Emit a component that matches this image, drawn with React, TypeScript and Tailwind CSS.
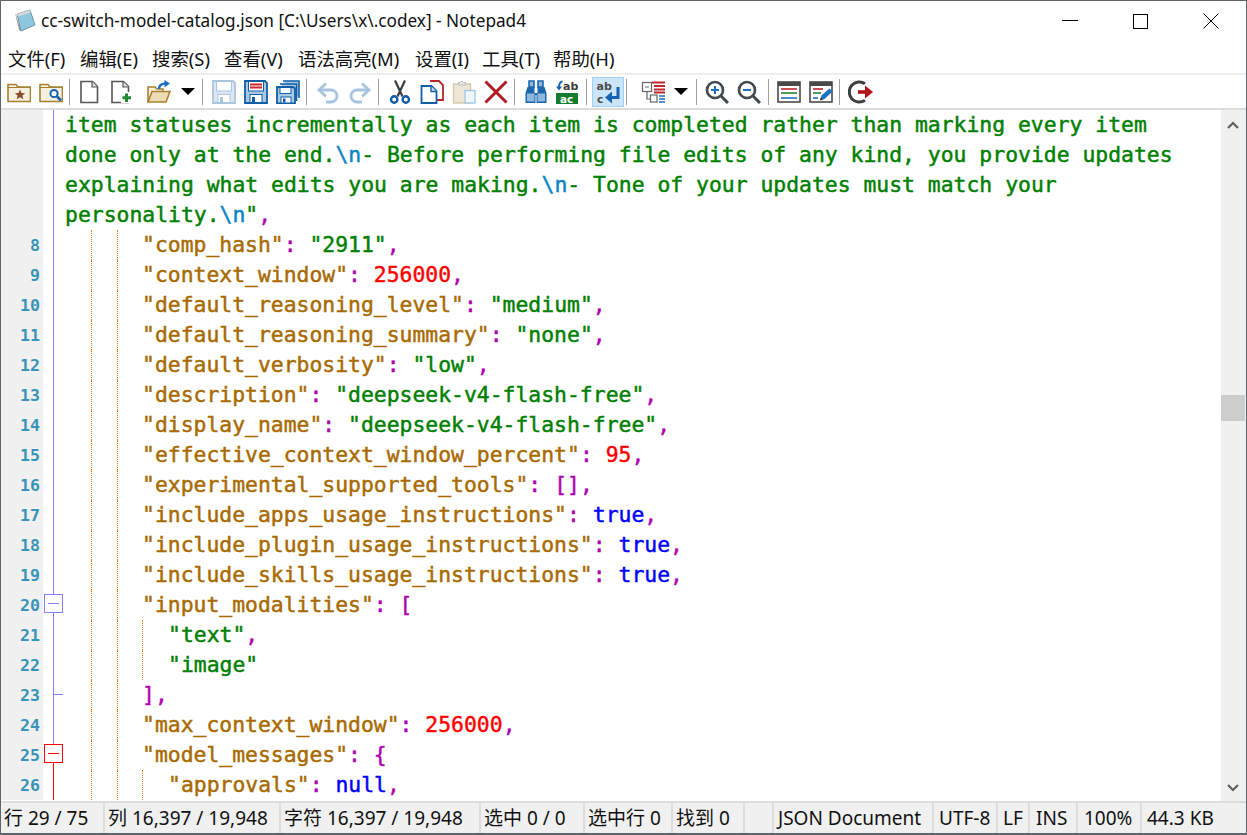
import React from "react";

const UI = "font-['Noto_Sans','Noto_Sans_CJK_SC',sans-serif]";

type Tok = [string, string];
const K = "text-[#a86a00]";
const S = "text-[#008000]";
const N = "text-[#ff0000]";
const B = "text-[#0000ff]";
const P = "text-[#b000b0]";
const E = "text-[#0a84c6]";

function kv(key: string, rest: Tok[]): Tok[] {
  return [[K, `"${key}"`], [P, ": "], ...rest];
}
const c: Tok = [P, ","];

type Row = { n?: number; g: number; t: Tok[]; fold?: string };
const rows: Row[] = [
  { g: 0, fold: "b", t: [[S, "item statuses incrementally as each item is completed rather than marking every item"]] },
  { g: 0, fold: "b", t: [[S, "done only at the end."], [E, "\\n"], [S, "- Before performing file edits of any kind, you provide updates"]] },
  { g: 0, fold: "b", t: [[S, "explaining what edits you are making."], [E, "\\n"], [S, "- Tone of your updates must match your"]] },
  { g: 0, fold: "b", t: [[S, "personality."], [E, "\\n"], [S, '"'], c] },
  { n: 8, g: 3, fold: "b", t: [...kv("comp_hash", [[S, '"2911"'], c])] },
  { n: 9, g: 3, fold: "b", t: [...kv("context_window", [[N, "256000"], c])] },
  { n: 10, g: 3, fold: "b", t: [...kv("default_reasoning_level", [[S, '"medium"'], c])] },
  { n: 11, g: 3, fold: "b", t: [...kv("default_reasoning_summary", [[S, '"none"'], c])] },
  { n: 12, g: 3, fold: "b", t: [...kv("default_verbosity", [[S, '"low"'], c])] },
  { n: 13, g: 3, fold: "b", t: [...kv("description", [[S, '"deepseek-v4-flash-free"'], c])] },
  { n: 14, g: 3, fold: "b", t: [...kv("display_name", [[S, '"deepseek-v4-flash-free"'], c])] },
  { n: 15, g: 3, fold: "b", t: [...kv("effective_context_window_percent", [[N, "95"], c])] },
  { n: 16, g: 3, fold: "b", t: [...kv("experimental_supported_tools", [[P, "[]"], c])] },
  { n: 17, g: 3, fold: "b", t: [...kv("include_apps_usage_instructions", [[B, "true"], c])] },
  { n: 18, g: 3, fold: "b", t: [...kv("include_plugin_usage_instructions", [[B, "true"], c])] },
  { n: 19, g: 3, fold: "b", t: [...kv("include_skills_usage_instructions", [[B, "true"], c])] },
  { n: 20, g: 3, fold: "openb", t: [...kv("input_modalities", [[P, "["]])] },
  { n: 21, g: 4, fold: "b", t: [[S, '"text"'], c] },
  { n: 22, g: 4, fold: "b", t: [[S, '"image"']] },
  { n: 23, g: 3, fold: "tick", t: [[P, "]"], c] },
  { n: 24, g: 3, fold: "b", t: [...kv("max_context_window", [[N, "256000"], c])] },
  { n: 25, g: 3, fold: "openr", t: [...kv("model_messages", [[P, "{"]])] },
  { n: 26, g: 4, fold: "r", t: [...kv("approvals", [[B, "null"], c])] },
];

function Fold({ kind }: { kind?: string }) {
  const blue = "#8080ff";
  const red = "#ff0000";
  return (
    <svg width="22" height="30" className="shrink-0 block" shapeRendering="crispEdges">
      {kind === "b" && <line x1="10.5" y1="0" x2="10.5" y2="30" stroke={blue} />}
      {kind === "r" && <line x1="10.5" y1="0" x2="10.5" y2="30" stroke={red} />}
      {kind === "tick" && (
        <>
          <line x1="10.5" y1="0" x2="10.5" y2="30" stroke={blue} />
          <line x1="10" y1="14.5" x2="20" y2="14.5" stroke={blue} />
        </>
      )}
      {kind === "openb" && (
        <>
          <line x1="10.5" y1="0" x2="10.5" y2="30" stroke={blue} />
          <rect x="1.5" y="4.5" width="18" height="18" fill="#fff" stroke={blue} />
          <line x1="5" y1="13.5" x2="16" y2="13.5" stroke={blue} />
        </>
      )}
      {kind === "openr" && (
        <>
          <line x1="10.5" y1="0" x2="10.5" y2="4" stroke={blue} />
          <line x1="10.5" y1="23" x2="10.5" y2="30" stroke={red} />
          <rect x="1.5" y="4.5" width="18" height="18" fill="#fff" stroke={red} />
          <line x1="5" y1="13.5" x2="16" y2="13.5" stroke={red} />
        </>
      )}
    </svg>
  );
}

function EditorRow({ r }: { r: Row }) {
  return (
    <div className="flex h-[30px] shrink-0">
      <div className="w-[42px] shrink-0 bg-[#f0f0f0] pr-[3px] text-right text-[#3a94b8] font-['DejaVu_Sans_Mono',monospace] text-[16.6px] font-bold leading-[32px]">
        {r.n ?? ""}
      </div>
      <Fold kind={r.fold} />
      <div className="flex-1 min-w-0 flex whitespace-pre font-['DejaVu_Sans_Mono',monospace] text-[21.4px] leading-[30px] [-webkit-text-stroke:0.45px]">
        {r.g > 0 && <span className="w-[26px] shrink-0" />}
        {r.g > 1 && <span className="w-[26px] shrink-0 border-l border-dotted border-[#e8801a]" />}
        {r.g > 2 && <span className="w-[25px] shrink-0 border-l border-dotted border-[#e8801a]" />}
        {r.g > 3 && <span className="w-[26px] shrink-0 border-l border-dotted border-[#e8801a]" />}
        <span>
          {r.t.map((t, i) => (
            <span key={i} className={t[0]}>
              {t[1]}
            </span>
          ))}
        </span>
      </div>
    </div>
  );
}

/* ---------- toolbar icons ---------- */
const Svg = ({ children, w = 24 }: { children: React.ReactNode; w?: number }) => (
  <svg width={w} height="24" viewBox={`0 0 ${w} 24`} fill="none" className="block">
    {children}
  </svg>
);

const FolderBase = () => (
  <path d="M1 21.5V4.5h8l2 2.5h12.5v14.5z" fill="#f6f0df" stroke="#a8812e" strokeWidth="1.6" />
);
const IconFolderStar = () => (
  <Svg>
    <FolderBase />
    <path d="M1 7.5h22.5" stroke="#a8812e" />
    <path d="M13 9.5l1.5 3.4 3.7.3-2.8 2.4.9 3.6-3.3-2-3.3 2 .9-3.6-2.8-2.4 3.7-.3z" fill="#8a4b28" />
  </Svg>
);
const IconFolderFind = () => (
  <Svg>
    <FolderBase />
    <path d="M1 7.5h22.5" stroke="#a8812e" />
    <circle cx="15" cy="13.5" r="3.6" fill="#fff" stroke="#1462b4" strokeWidth="2" />
    <path d="M18 16.5l4 4" stroke="#1462b4" strokeWidth="2.6" />
  </Svg>
);
const IconNew = () => (
  <Svg>
    <path d="M3 1.5h11.5l5 5v16h-16.5z" fill="#fff" stroke="#565656" strokeWidth="1.6" />
    <path d="M14 1.5v5.5h5.5" fill="#ddd" stroke="#565656" strokeWidth="1.2" />
  </Svg>
);
const IconNewAdd = () => (
  <Svg>
    <path d="M2 1.5h11.5l5 5v16h-16.5z" fill="#fff" stroke="#565656" strokeWidth="1.6" />
    <path d="M13 1.5v5.5h5.5" fill="#ddd" stroke="#565656" strokeWidth="1.2" />
    <rect x="11" y="12" width="11" height="11" fill="#fff" />
    <path d="M16.5 13.5v8.5M12.5 17.7h8.5" stroke="#1e8a32" strokeWidth="3" />
  </Svg>
);
const IconOpen = () => (
  <Svg w={26}>
    <path d="M2 22V7h7l2 2h6v3" fill="#f6f0df" stroke="#a8812e" strokeWidth="1.6" />
    <path d="M2 22l4-10.5h18L20 22z" fill="#ecdcb6" stroke="#a8812e" strokeWidth="1.6" />
    <path d="M13 9c0-4 3-5.5 7-5.5" stroke="#1b6fc4" strokeWidth="2.4" />
    <path d="M18.5 0l5.5 3.5L18.5 7.5z" fill="#1b6fc4" />
  </Svg>
);
const Caret = () => (
  <svg width="14" height="7" viewBox="0 0 14 7" className="block">
    <path d="M0 0h14L7 7z" fill="#000" />
  </svg>
);
const Floppy = ({ main, paper, stripe }: { main: string; paper: string; stripe?: boolean }) => (
  <>
    <path d="M1 1h20l2 2v20H1z" fill={paper} stroke={main} strokeWidth="1.8" />
    <rect x="4.5" y="1.5" width="15" height="9.5" fill="#fff" stroke={main} />
    {stripe && <path d="M6 4.5h12M6 7.5h12" stroke="#c8252b" strokeWidth="1.8" />}
    <rect x="6" y="14.5" width="12" height="8" fill="#fff" stroke={main} />
    <rect x="8" y="17" width="3" height="5" fill={main} />
  </>
);
const IconSaveOff = () => (
  <Svg>
    <Floppy main="#a9c5dd" paper="#dbe6ef" />
  </Svg>
);
const IconSaveAs = () => (
  <Svg>
    <Floppy main="#0f5ea6" paper="#a9c9e4" stripe />
  </Svg>
);
const IconSaveAll = () => (
  <Svg>
    <path d="M7 1h16v17" fill="#a9c9e4" stroke="#0f5ea6" strokeWidth="1.6" />
    <path d="M4 4h16.5v17" fill="#a9c9e4" stroke="#0f5ea6" strokeWidth="1.6" />
    <path d="M1 7h16l2 1.5v15H1z" fill="#a9c9e4" stroke="#0f5ea6" strokeWidth="1.8" />
    <rect x="4" y="7.5" width="11" height="6" fill="#fff" stroke="#0f5ea6" />
    <rect x="5" y="17" width="10" height="6" fill="#fff" stroke="#0f5ea6" />
    <rect x="7" y="18.5" width="2.5" height="4" fill="#0f5ea6" />
  </Svg>
);
const IconUndo = () => (
  <Svg>
    <path d="M4 10h11a6 6 0 0 1 0 12h-5" stroke="#a6c4dd" strokeWidth="2.8" />
    <path d="M10 3.5L3 10l7 6.5" stroke="#a6c4dd" strokeWidth="2.8" />
  </Svg>
);
const IconRedo = () => (
  <Svg>
    <path d="M20 10H9a6 6 0 0 0 0 12h5" stroke="#a6c4dd" strokeWidth="2.8" />
    <path d="M14 3.5L21 10l-7 6.5" stroke="#a6c4dd" strokeWidth="2.8" />
  </Svg>
);
const IconCut = () => (
  <Svg>
    <path d="M7 0.5l7.5 16M17 0.5L9.5 16.5" stroke="#3d3d3d" strokeWidth="2.2" />
    <circle cx="6.2" cy="19.5" r="3.2" fill="#fff" stroke="#0f5ea6" strokeWidth="2.4" />
    <circle cx="17.8" cy="19.5" r="3.2" fill="#fff" stroke="#0f5ea6" strokeWidth="2.4" />
  </Svg>
);
const IconCopy = () => (
  <Svg>
    <path d="M10 1h9l4 4v15h-7" fill="#fff" stroke="#b3262a" strokeWidth="1.8" />
    <path d="M1.5 6h10l5 5v12h-15z" fill="#fff" stroke="#0f5ea6" strokeWidth="1.8" />
    <path d="M11 6v5.5h5.5" fill="#cfe0ef" stroke="#0f5ea6" strokeWidth="1.4" />
  </Svg>
);
const IconPaste = () => (
  <Svg>
    <rect x="1.5" y="4" width="17" height="19" fill="#ede6d6" stroke="#d3c7a8" strokeWidth="1.4" />
    <path d="M6.5 5V2.5h2L10 1l1.5 1.5h2V5z" fill="#e9e9e9" stroke="#b9b9b9" />
    <rect x="13" y="10.5" width="10" height="12.5" fill="#eef5fb" stroke="#a6c8e4" strokeWidth="1.4" />
  </Svg>
);
const IconDelete = () => (
  <Svg>
    <path d="M1.5 1.5l21 21M22.5 1.5l-21 21" stroke="#b21a1f" strokeWidth="3" />
  </Svg>
);
const IconFind = () => (
  <Svg>
    <path d="M5 1h5v6H5zM14 1h5v6h-5z" fill="#8fb8dc" stroke="#1a66ae" strokeWidth="1.6" />
    <path d="M3.5 7h7v6h3V7h7l2 6v10h-10V15h-1v8H1.5V13z" fill="#1a66ae" />
    <rect x="3" y="13.5" width="7.5" height="8" fill="#8fb8dc" />
    <rect x="13.5" y="13.5" width="7.5" height="8" fill="#8fb8dc" />
  </Svg>
);
const IconReplace = () => (
  <Svg>
    <path d="M6.5 1.5C3.5 1.5 3 4 3 8" stroke="#1762b4" strokeWidth="2" />
    <path d="M0 6.5h6L3 10.5z" fill="#1762b4" />
    <text x="7" y="9.5" fontFamily="DejaVu Sans" fontWeight="700" fontSize="11" fill="#3c3c3c">ab</text>
    <rect x="0" y="13" width="22" height="11" fill="#147c2c" />
    <text x="4" y="22.5" fontFamily="DejaVu Sans" fontWeight="700" fontSize="10.5" fill="#fff">ac</text>
  </Svg>
);
const IconWrap = () => (
  <Svg>
    <text x="0.5" y="9.5" fontFamily="DejaVu Sans" fontWeight="700" fontSize="11" fill="#4a4a4a">ab</text>
    <text x="1" y="22.5" fontFamily="DejaVu Sans" fontWeight="700" fontSize="10.5" fill="#4a4a4a">c</text>
    <path d="M22 7v10.5H14" stroke="#1462b4" strokeWidth="3" />
    <path d="M16 11.5l-7 6 7 6z" fill="#1462b4" />
  </Svg>
);
const IconScheme = () => (
  <Svg>
    <rect x="1.5" y="2.5" width="9" height="9" fill="#fff" stroke="#666" strokeWidth="1.2" />
    <path d="M4 7h4M6 12v7h4" stroke="#666" strokeWidth="1.2" />
    <rect x="9.5" y="15" width="6.5" height="7" fill="#fff" stroke="#666" strokeWidth="1.2" />
    <path d="M11 2.5h13M13 6h11M13 9.5h11M13 12.5h11" stroke="#c0262b" strokeWidth="1.8" />
    <path d="M18 16h6M18 19h6M18 22h6" stroke="#1b6fc4" strokeWidth="1.6" />
  </Svg>
);
const IconZoomIn = ({ minus }: { minus?: boolean }) => (
  <Svg>
    <circle cx="10" cy="10" r="8" fill="#fff" stroke="#3f4a50" strokeWidth="2.6" />
    <path d="M16 16l7 7" stroke="#3f4a50" strokeWidth="3" />
    <path d="M6 10h8" stroke="#1b6fc4" strokeWidth="2" />
    {!minus && <path d="M10 6v8" stroke="#1b6fc4" strokeWidth="2" />}
  </Svg>
);
const IconView = ({ edit }: { edit?: boolean }) => (
  <Svg>
    <rect x="1" y="2" width="22" height="20" fill="#fff" stroke="#4a4a4a" strokeWidth="1.6" />
    <rect x="1" y="2" width="22" height="4" fill="#4a4a4a" />
    <path d={edit ? "M4 9h10" : "M4 9h16"} stroke="#c0262b" strokeWidth="1.6" />
    <path d={edit ? "M4 13h8" : "M4 13h16"} stroke="#1e8a32" strokeWidth="1.6" />
    <path d={edit ? "M4 18h5" : "M4 18h16"} stroke="#1b6fc4" strokeWidth="1.6" />
    {edit && (
      <>
        <path d="M11 20l1.5-4.5 8-7 3 3-8 7.5z" fill="#1b6fc4" />
        <path d="M11 20.5l.8-3 2.2 2.2z" fill="#333" />
      </>
    )}
  </Svg>
);
const IconExit = () => (
  <Svg w={26}>
    <path d="M17 3.8A10 10 0 1 0 17 20.2" stroke="#3e3e3e" strokeWidth="3" />
    <path d="M10 12h10" stroke="#b3141a" strokeWidth="3.6" />
    <path d="M17 5.5l8 6.5-8 6.5z" fill="#b3141a" />
  </Svg>
);

const Cell = ({ w, children }: { w: string; children: React.ReactNode }) => (
  <div className={`${w} h-full shrink-0 flex items-center justify-center`}>{children}</div>
);
const Sep = ({ w, ml }: { w: string; ml: string }) => (
  <div className={`${w} h-full shrink-0 flex items-center`}>
    <div className={`${ml} w-px h-[26px] bg-[#a0a0a0]`} />
  </div>
);

function Toolbar() {
  return (
    <div className="h-[35px] shrink-0 flex items-center pl-[2px] bg-white border-t-2 border-[#f0f0f0] border-b-0">
      <Cell w="w-8"><IconFolderStar /></Cell>
      <Cell w="w-8"><IconFolderFind /></Cell>
      <Sep w="w-[7px]" ml="ml-[2px]" />
      <Cell w="w-8"><IconNew /></Cell>
      <Cell w="w-8"><IconNewAdd /></Cell>
      <Cell w="w-[42px]"><IconOpen /></Cell>
      <Cell w="w-4"><Caret /></Cell>
      <Sep w="w-3" ml="ml-[6px]" />
      <Cell w="w-8"><IconSaveOff /></Cell>
      <Cell w="w-8"><IconSaveAs /></Cell>
      <Cell w="w-8"><IconSaveAll /></Cell>
      <Sep w="w-2" ml="ml-[2px]" />
      <Cell w="w-8"><IconUndo /></Cell>
      <Cell w="w-8"><IconRedo /></Cell>
      <Sep w="w-2" ml="ml-[2px]" />
      <Cell w="w-8"><IconCut /></Cell>
      <Cell w="w-8"><IconCopy /></Cell>
      <Cell w="w-8"><IconPaste /></Cell>
      <Cell w="w-8"><IconDelete /></Cell>
      <Sep w="w-2" ml="ml-[2px]" />
      <Cell w="w-8"><IconFind /></Cell>
      <Cell w="w-8"><IconReplace /></Cell>
      <Sep w="w-2" ml="ml-[2px]" />
      <div className="w-8 h-[30px] shrink-0 flex items-center justify-center bg-[#cce4f7] border border-[#99d1ff]">
        <IconWrap />
      </div>
      <Sep w="w-[13px]" ml="ml-[2px]" />
      <Cell w="w-8"><IconScheme /></Cell>
      <Cell w="w-6"><Caret /></Cell>
      <Sep w="w-2" ml="ml-[3px]" />
      <Cell w="w-8"><IconZoomIn /></Cell>
      <Cell w="w-8"><IconZoomIn minus /></Cell>
      <Sep w="w-2" ml="ml-[3px]" />
      <Cell w="w-8"><IconView /></Cell>
      <Cell w="w-8"><IconView edit /></Cell>
      <Sep w="w-2" ml="ml-[2px]" />
      <Cell w="w-8"><IconExit /></Cell>
    </div>
  );
}

function TitleBar() {
  return (
    <div className="h-[37px] shrink-0 pt-[3px] flex items-center bg-white">
      <svg width="24" height="24" viewBox="0 0 24 24" className="ml-[11px] shrink-0 block">
        <path d="M3 4l4 17 2 1.5L4 6z" fill="#9a9a9a" />
        <path d="M5 5L18 1l5 15-14 6z" fill="#8fc7de" stroke="#5b7f90" strokeWidth="0.8" />
        <path d="M5 5L18 1l.8 2.5L6 7.5z" fill="#d8d8d8" />
      </svg>
      <div className="ml-[5px] text-[17.2px] text-[#111] whitespace-pre font-['Noto_Sans',sans-serif]">
        cc-switch-model-catalog.json [C:\Users\x\.codex] - Notepad4
      </div>
      <div className="ml-auto flex items-center h-full">
        <div className="w-[71px] pl-[2px] flex justify-center">
          <svg width="16" height="16" className="block" shapeRendering="crispEdges"><line x1="0" y1="7.5" x2="16" y2="7.5" stroke="#000" /></svg>
        </div>
        <div className="w-[71px] pl-[2px] flex justify-center">
          <svg width="15" height="15" className="block" shapeRendering="crispEdges"><rect x="0.5" y="0.5" width="14" height="14" fill="none" stroke="#000" /></svg>
        </div>
        <div className="w-[71px] flex justify-center">
          <svg width="16" height="16" className="block"><path d="M0.5 0.5l15 15M15.5 0.5l-15 15" stroke="#000" strokeWidth="1" /></svg>
        </div>
      </div>
    </div>
  );
}

const menus: [string, string][] = [
  ["文件(F)", "w-[72px]"],
  ["编辑(E)", "w-[72px]"],
  ["搜索(S)", "w-[72px]"],
  ["查看(V)", "w-[74px]"],
  ["语法高亮(M)", "w-[117px]"],
  ["设置(I)", "w-[67px]"],
  ["工具(T)", "w-[71px]"],
  ["帮助(H)", "w-[70px]"],
];

function MenuBar() {
  return (
    <div className={`h-[35px] shrink-0 pt-[6px] flex items-center pl-[7px] bg-white text-[18.4px] text-[#111] ${UI}`}>
      {menus.map(([m, w]) => (
        <div key={m} className={`${w} shrink-0 whitespace-pre`}>
          {m}
        </div>
      ))}
    </div>
  );
}

function Scrollbar() {
  return (
    <div className="w-[25px] shrink-0 flex flex-col bg-[#f0f0f0] pr-px">
      <div className="h-[29px] shrink-0 flex items-center justify-center">
        <svg width="12" height="8" viewBox="0 0 12 8" className="block"><path d="M1 7l5-5 5 5" fill="none" stroke="#606060" strokeWidth="2.2" /></svg>
      </div>
      <div className="h-[256px] shrink-0" />
      <div className="h-[26px] shrink-0 bg-[#cdcdcd]" />
      <div className="flex-1" />
      <div className="h-[27px] shrink-0 flex items-center justify-center">
        <svg width="12" height="8" viewBox="0 0 12 8" className="block"><path d="M1 1l5 5 5-5" fill="none" stroke="#606060" strokeWidth="2.2" /></svg>
      </div>
    </div>
  );
}

const status: [string, string, string][] = [
  ["行 29 / 75", "w-[104px]", "pl-[3px]"],
  ["列 16,397 / 19,948", "w-[176px]", "pl-[3px]"],
  ["字符 16,397 / 19,948", "w-[200px]", "pl-[3px]"],
  ["选中 0 / 0", "w-[104px]", "pl-[3px]"],
  ["选中行 0", "w-[88px]", "pl-[3px]"],
  ["找到 0", "w-[72px]", "pl-[3px]"],
  ["", "w-[29px]", "pl-[3px]"],
  ["JSON Document", "w-[160px]", "pl-[4px]"],
  ["UTF-8", "w-[64px]", "pl-[5px]"],
  ["LF", "w-[32px]", "pl-[5px]"],
  ["INS", "w-[48px]", "pl-[6px]"],
  ["100%", "w-[64px]", "pl-[6px]"],
];

function StatusBar() {
  return (
    <div className={`h-[32px] shrink-0 flex bg-[#f0f0f0] border-t-2 border-[#dcdcdc] text-[19px] text-[#111] ${UI}`}>
      {status.map(([s, w, p], i) => (
        <div key={i} className={`${w} ${p} shrink-0 border-r-2 border-[#dcdcdc] leading-[31px] whitespace-pre`}>
          {s}
        </div>
      ))}
      <div className="flex-1 pl-[5px] leading-[31px] whitespace-pre">44.3 KB</div>
    </div>
  );
}

export default function App() {
  return (
    <div className="w-[1247px] h-[835px] flex flex-col overflow-hidden bg-white border border-[#5f6468] border-b-2">
      <TitleBar />
      <MenuBar />
      <Toolbar />
      <div className="flex-1 min-h-0 flex border-t-2 border-[#dcdcdc]">
        <div className="flex-1 min-w-0 overflow-hidden flex flex-col">
          {rows.map((r, i) => (
            <EditorRow key={i} r={r} />
          ))}
        </div>
        <Scrollbar />
      </div>
      <StatusBar />
    </div>
  );
}
